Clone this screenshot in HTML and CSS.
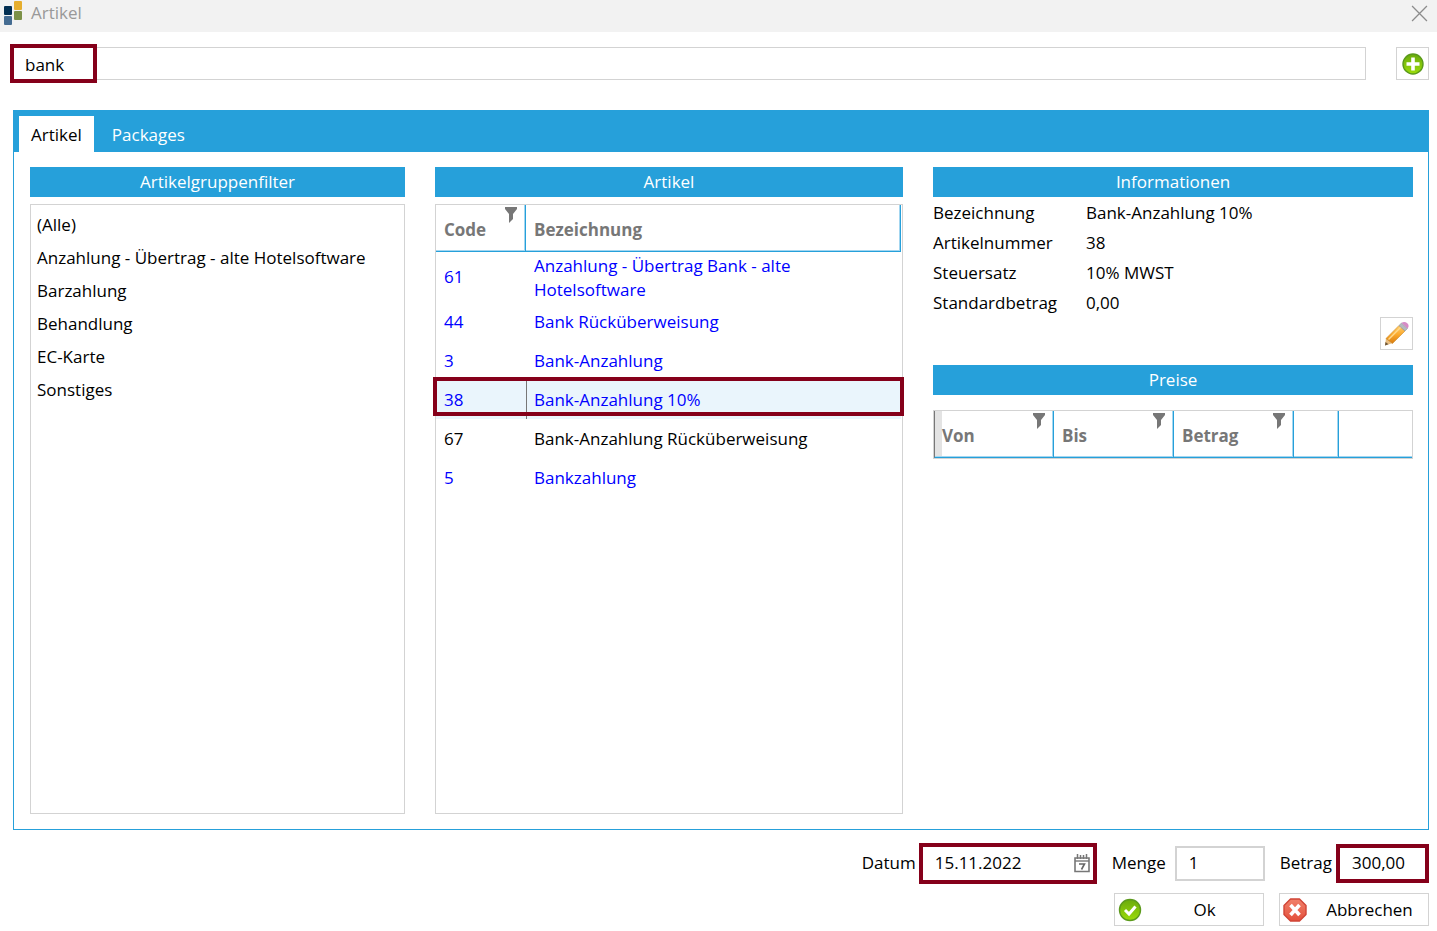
FILE: index.html
```html
<!DOCTYPE html>
<html lang="de">
  <head>
    <meta charset="UTF-8" />
    <meta name="viewport" content="width=device-width, initial-scale=1.0" />
    <title>Artikel</title>
    <link rel="stylesheet" href="styles.css">
  </head>
  <body>
    <!-- Filtersymbol und Farbverläufe -->
    <svg class="defs" aria-hidden="true">
      <symbol id="funnel" viewBox="0 0 12 16">
        <path d="M0 0h12v2L8 7v5l-4 4V7L0 2z" fill="#777" />
      </symbol>
      <linearGradient id="green" x1="0" y1="0" x2="0" y2="1">
        <stop offset="0" stop-color="#6aaa0c" />
        <stop offset="1" stop-color="#9bdc0a" />
      </linearGradient>
      <linearGradient id="red" x1="0" y1="0" x2="0" y2="1">
        <stop offset="0" stop-color="#f0806a" />
        <stop offset="1" stop-color="#e4503c" />
      </linearGradient>
      <linearGradient id="wood" x1="0" y1="0" x2="0" y2="1">
        <stop offset="0" stop-color="#ffd070" />
        <stop offset="0.5" stop-color="#fba92c" />
        <stop offset="1" stop-color="#d97c10" />
      </linearGradient>
    </svg>

    <!-- Titelleiste -->
    <header class="titlebar">
      <svg class="logo" viewBox="0 0 20 26" aria-hidden="true">
        <rect x="1" y="6" width="8" height="9" rx="1" fill="#022f52" />
        <rect x="1" y="16" width="8" height="9" rx="1" fill="#456c92" />
        <rect x="11" y="1" width="8" height="9" rx="1" fill="#e6ae2e" />
        <rect x="11" y="11" width="8" height="9" rx="1" fill="#7c9148" />
      </svg>
      <span>Artikel</span>
      <button class="close" type="button" aria-label="Schließen">
        <svg viewBox="0 0 16 16"><path d="M1 1l14 14M15 1L1 15" stroke="#8c8c8c" stroke-width="1.2" /></svg>
      </button>
    </header>

    <!-- Suche -->
    <div class="search">
      <div class="search-box">
        <input type="text" value="bank" aria-label="Suche" />
        <span class="mark"></span>
      </div>
      <button class="icon-button" type="button" aria-label="Neu">
        <svg viewBox="0 0 24 24">
          <circle cx="12" cy="12" r="10" fill="url(#green)" stroke="#5a9a1a" stroke-width="1.4" />
          <path d="M12 5.5v13M5.500 12h13" stroke="#fff" stroke-width="3.6" />
        </svg>
      </button>
    </div>

    <!-- Registerkarten -->
    <main class="tabs">
      <nav class="tab-bar">
        <button class="tab active" type="button">Artikel</button>
        <button class="tab" type="button">Packages</button>
      </nav>
      <div class="columns">
        <section class="column">
          <h2>Artikelgruppenfilter</h2>
          <ul class="box groups">
            <li>(Alle)</li>
            <li>Anzahlung - Übertrag - alte Hotelsoftware</li>
            <li>Barzahlung</li>
            <li>Behandlung</li>
            <li>EC-Karte</li>
            <li>Sonstiges</li>
          </ul>
        </section>

        <section class="column">
          <h2>Artikel</h2>
          <div class="box">
            <table class="articles">
              <thead>
                <tr>
                  <th class="code">Code<svg class="funnel"><use href="#funnel" /></svg></th>
                  <th>Bezeichnung</th>
                </tr>
              </thead>
              <tbody>
                <tr><td>61</td><td class="name">Anzahlung - Übertrag Bank - alte Hotelsoftware</td></tr>
                <tr><td>44</td><td>Bank Rücküberweisung</td></tr>
                <tr><td>3</td><td>Bank-Anzahlung</td></tr>
                <tr class="selected"><td>38</td><td>Bank-Anzahlung 10%</td></tr>
                <tr class="plain"><td>67</td><td>Bank-Anzahlung Rücküberweisung</td></tr>
                <tr><td>5</td><td>Bankzahlung</td></tr>
              </tbody>
            </table>
          </div>
        </section>

        <section class="column">
          <h2>Informationen</h2>
          <dl class="info">
            <dt>Bezeichnung</dt><dd>Bank-Anzahlung 10%</dd>
            <dt>Artikelnummer</dt><dd>38</dd>
            <dt>Steuersatz</dt><dd>10% MWST</dd>
            <dt>Standardbetrag</dt><dd>0,00</dd>
          </dl>
          <button class="icon-button edit" type="button" aria-label="Bearbeiten">
            <svg viewBox="0 0 24 24">
              <path d="M0 23.500l1-7.500L8 21z" fill="#e8bd80" />
              <path d="M0 23.500l.5-3.500 3 2.200z" fill="#6b5436" />
              <path d="M1 16.500L14 3.500l6 5.500L7.500 21.500z" fill="url(#wood)" stroke="#c98a2c" stroke-width=".6" />
              <path d="M3.500 17.500L16 5" stroke="#ffd98c" stroke-width="1.4" />
              <path d="M14 3.500l2.500-2.500 6 5.500L20 9z" fill="#b4b9bf" stroke="#8f959c" stroke-width=".6" />
              <path d="M16.500 1C18-.3 20.500-.3 22.300 1.300S24 5 22.500 6.500z" fill="#d58cc6" />
            </svg>
          </button>
          <h2 class="prices-title">Preise</h2>
          <table class="prices">
            <thead>
              <tr>
                <th class="value first">Von<svg class="funnel"><use href="#funnel" /></svg></th>
                <th class="value">Bis<svg class="funnel"><use href="#funnel" /></svg></th>
                <th class="value">Betrag<svg class="funnel"><use href="#funnel" /></svg></th>
                <th class="small"></th>
                <th></th>
              </tr>
            </thead>
          </table>
        </section>
      </div>
    </main>

    <!-- Eingaben und Schaltflächen -->
    <footer class="footer">
      <div class="fields">
        <label for="datum">Datum</label>
        <div class="field date marked">
          <input type="text" id="datum" value="15.11.2022" />
          <svg viewBox="0 0 16 20" aria-hidden="true">
            <path d="M1 5h14v13.500H1z" fill="#fff" stroke="#777" stroke-width="1.600" />
            <path d="M1 8h14" stroke="#777" stroke-width="1.400" />
            <path d="M3.500 1v5M6.500 2v4M9.500 2v4M12.500 1v5" stroke="#777" stroke-width="1.500" />
            <path d="M5 11h5.500L7.500 16.500" fill="none" stroke="#666" stroke-width="1.600" />
          </svg>
        </div>
        <label for="menge">Menge</label>
        <div class="field amount"><input type="text" id="menge" value="1" /></div>
        <label for="betrag">Betrag</label>
        <div class="field total marked"><input type="text" id="betrag" value="300,00" /></div>
      </div>
      <div class="buttons">
        <button class="action" type="button">
          <svg viewBox="0 0 24 24" aria-hidden="true">
            <circle cx="12" cy="12" r="10.500" fill="url(#green)" stroke="#5c9a1c" stroke-width="1.400" />
            <path d="M7 12l4 4 6.500-7.500" fill="none" stroke="#fff" stroke-width="3" />
          </svg>
          <span>Ok</span>
        </button>
        <button class="action" type="button">
          <svg viewBox="0 0 24 24" aria-hidden="true">
            <path d="M7.500 1h9L23 7.500v9L16.500 23h-9L1 16.500v-9z" fill="url(#red)" stroke="#d04436" stroke-width="1.400" stroke-linejoin="round" />
            <path d="M7.500 7l9 10M16.500 7l-9 10" stroke="#fff" stroke-width="3.600" />
          </svg>
          <span>Abbrechen</span>
        </button>
      </div>
    </footer>
  </body>
</html>
```
FILE: styles.css
```css
* {
  box-sizing: border-box;
}

body {
  margin: 0;
  min-height: 100vh;
  display: flex;
  flex-direction: column;
  background-color: #fff;
  color: #000;
  font-family: "Open Sans", "Noto Sans", sans-serif;
  font-size: 17px;
  line-height: 24px;
}

button,
input {
  font: inherit;
  color: inherit;
}

button {
  padding: 0;
  border: none;
  background: none;
}

.defs {
  position: absolute;
  width: 0;
  height: 0;
}

/* Titelleiste */
.titlebar {
  height: 32px;
  padding: 0 9px 6px 3px;
  display: flex;
  align-items: center;
  gap: 8px;
  background-color: #f2f2f2;
  color: #999;
}

.logo {
  width: 20px;
  height: 26px;
}

.close {
  width: 17px;
  height: 17px;
  margin-left: auto;
}

.close svg {
  display: block;
}

/* Suche */
.search {
  margin: 15px 8px 30px 13px;
  display: flex;
  gap: 30px;
}

.search-box {
  flex: 1;
  position: relative;
}

.search-box input {
  display: block;
  width: 100%;
  height: 33px;
  padding: 2px 11px 0;
  border: 1px solid #d3d3d3;
}

/* rote Markierung */
.mark {
  position: absolute;
  left: -3px;
  top: -3px;
  width: 87px;
  height: 39px;
  border: 4px solid #85001a;
  pointer-events: none;
}

.icon-button {
  width: 33px;
  height: 33px;
  display: flex;
  align-items: center;
  justify-content: center;
  border: 1px solid #d3d3d3;
}

.icon-button svg {
  width: 24px;
  height: 24px;
}

/* Registerkarten */
.tabs {
  flex: 1;
  margin: 0 8px 0 13px;
  display: flex;
  flex-direction: column;
  border: 1px solid #26a0da;
}

.tab-bar {
  height: 41px;
  padding: 5px 5px 0;
  display: flex;
  background-color: #26a0da;
}

.tab {
  padding: 2px 12px 0;
  color: #fff;
}

.tab + .tab {
  padding: 2px 18px 0;
}

.tab.active {
  background-color: #fff;
  color: #000;
}

.columns {
  flex: 1;
  padding: 15px 15px 15px 16px;
  display: grid;
  grid-template-columns: 375fr 468fr 480fr;
  gap: 30px;
}

.column {
  display: flex;
  flex-direction: column;
}

h2 {
  margin: 0;
  font-size: 17px;
  font-weight: normal;
  line-height: 30px;
  text-align: center;
  background-color: #26a0da;
  color: #fff;
}

.box {
  flex: 1;
  margin: 7px 0 0;
  border: 1px solid #d3d3d3;
}

.groups {
  padding: 3px 6px;
  list-style: none;
  line-height: 33px;
}

/* Tabellen */
table {
  width: 100%;
  table-layout: fixed;
  border-collapse: separate;
  border-spacing: 0;
}

th {
  position: relative;
  height: 47px;
  padding: 4px 8px 0;
  border-right: 1px solid #26a0da;
  border-bottom: 1px solid #26a0da;
  box-shadow: inset -1px -1px #a3d6f0;
  text-align: left;
  color: #777;
}

.funnel {
  position: absolute;
  top: 2px;
  right: 8px;
  width: 12px;
  height: 16px;
}

.articles {
  width: calc(100% - 1px);
}

.articles .code {
  width: 90px;
}

.articles td {
  height: 39px;
  padding: 0 8px;
  color: #00f;
}

.articles .name {
  height: 50px;
  padding: 2px 80px 0 8px;
}

.articles .plain td {
  color: #000;
}

.articles .selected {
  position: relative;
  background-color: #eaf5fc;
}

.articles .selected td + td {
  border-left: 1px solid #777;
  padding-left: 7px;
}

.articles .selected td:last-child::after {
  content: "";
  position: absolute;
  inset: -3px -3px 3px;
  border: 4px solid #85001a;
}

/* Informationen */
.info {
  margin: 1px 0 -1px;
  display: grid;
  grid-template-columns: 153px 1fr;
  line-height: 30px;
}

.info dd {
  margin: 0;
}

.edit {
  align-self: flex-end;
  margin-bottom: 15px;
}

.prices {
  margin-top: 15px;
  border: 1px solid #d3d3d3;
}

.prices .value {
  width: 120px;
}

.prices .first {
  border-left: 1px solid #777;
  padding-left: 7px;
  background: linear-gradient(to right, #e3e3e3 7px, #fff 7px);
}

.prices .small {
  width: 45px;
}

.prices th:last-child {
  border-right: none;
  box-shadow: inset 0 -1px #a3d6f0;
}

/* Fußzeile */
.footer {
  padding: 13px 8px 5px;
}

.fields,
.buttons {
  display: flex;
  justify-content: flex-end;
  align-items: center;
}

.fields {
  height: 41px;
}

.fields label {
  padding-bottom: 2px;
}

.field {
  height: 35px;
  margin: 0 15px 0 9px;
  display: flex;
  align-items: center;
  border: 2px solid #d3d3d3;
}

.field input {
  width: 100%;
  height: 100%;
  min-width: 0;
  padding: 0 0 2px 12px;
  border: none;
  background: none;
  outline: none;
}

.field.marked {
  height: 39px;
  border: 4px solid #85001a;
}

.field.date {
  width: 178px;
  height: 41px;
  margin-left: 3px;
}

.field.date svg {
  flex: none;
  width: 16px;
  height: 20px;
  margin: 0 3px 2px 0;
}

.field.amount {
  width: 90px;
}

.field.total {
  width: 93px;
  margin: 0 0 0 4px;
}

.buttons {
  margin-top: 9px;
  gap: 15px;
}

.action {
  width: 150px;
  height: 33px;
  padding: 0 4px 0 3px;
  display: flex;
  align-items: center;
  border: 1px solid #d3d3d3;
}

.action svg {
  flex: none;
  width: 24px;
  height: 24px;
}

.action span {
  flex: 1;
  padding-left: 8px;
}
```
